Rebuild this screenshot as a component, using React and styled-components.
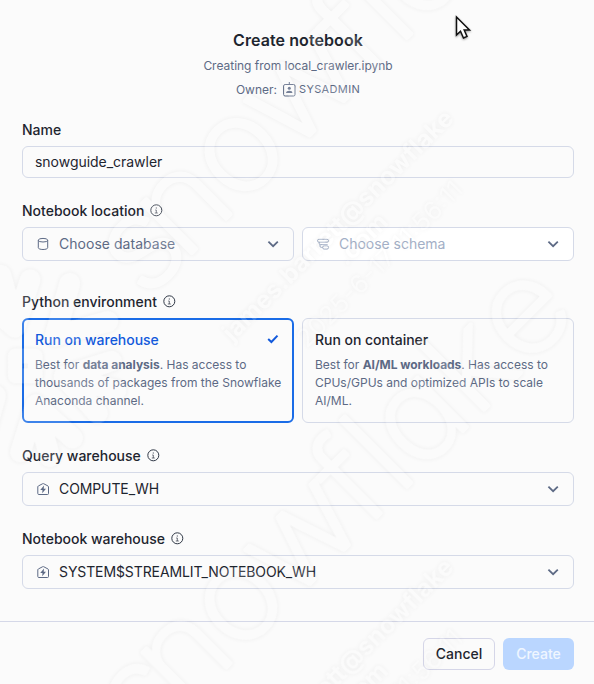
import React from "react";
import styled, { createGlobalStyle } from "styled-components";

const GlobalStyle = createGlobalStyle`
  * { box-sizing: border-box; }
  body { margin: 0; background: #fbfbfb; }
`;

const Dialog = styled.main`
  position: relative;
  display: flex;
  flex-direction: column;
  width: 594px;
  height: 684px;
  overflow: hidden;
  background: #fbfbfb;
  color: #1e252f;
  font: 400 14px/20px Inter, sans-serif;
`;
const Header = styled.header`
  display: flex;
  flex-direction: column;
  align-items: center;
  padding: 30px 0 0 2px;
  height: 120px;
  color: #5d6a85;
  font-size: 12px;
`;
const Title = styled.h1`
  margin: 0 0 5px;
  color: #1e252f;
  font-size: 16px;
  line-height: 21px;
  font-weight: 600;
  letter-spacing: 0.08px;
`;
const Subtitle = styled.div`
  letter-spacing: -0.02px;
`;
const Owner = styled.div`
  display: flex;
  align-items: center;
  margin-top: 4px;
  svg { margin: -2px 3px 0 6px; }
`;
const Role = styled.span`
  margin-top: -2px;
  font-size: 11px;
  letter-spacing: 0.35px;
`;
const Form = styled.div`
  display: flex;
  flex-direction: column;
  height: 501px;
  padding: 0 20px 0 22px;
`;
const Field = styled.section`
  height: ${(p) => p.$height}px;
`;
const Label = styled.div`
  display: flex;
  align-items: center;
  gap: 5px;
  height: 20px;
  margin-bottom: 6px;
  font-weight: 500;
  letter-spacing: 0;
`;
const Input = styled.div`
  display: flex;
  align-items: center;
  height: 32px;
  padding: 0 12px;
  border: 1px solid #d5dae8;
  border-radius: 6px;
  letter-spacing: -0.03px;
`;
const Pair = styled.div`
  display: grid;
  grid-template-columns: repeat(2, minmax(0, 1fr));
  gap: 8px;
`;
const Select = styled.div`
  display: flex;
  align-items: center;
  height: 34px;
  padding: 0 12px;
  border: 1px solid #d5dae8;
  border-radius: 6px;
  background: ${(p) => (p.$disabled ? "#fff" : "transparent")};
  color: ${(p) => (p.$disabled ? "#a3afc6" : p.$placeholder ? "#5d6a85" : "#1e252f")};
  letter-spacing: ${(p) => p.$track || -0.1}px;
  svg { flex: none; }
`;
const Value = styled.span`
  flex: 1;
  margin-left: 8px;
`;
const Option = styled.article`
  height: 105px;
  padding: ${(p) => (p.$selected ? "10px 11px 0 11px" : "11px 11px 0 12px")};
  border: ${(p) => (p.$selected ? "2px solid #1a6ce7" : "1px solid #d5dae8")};
  border-radius: 6px;
  color: #5d6a85;
  font-size: 12px;
  line-height: 18px;
`;
const OptionTitle = styled.div`
  display: flex;
  align-items: center;
  justify-content: space-between;
  height: 20px;
  margin-bottom: 6px;
  color: ${(p) => (p.$selected ? "#1259db" : "#1e252f")};
  font-size: 14px;
  font-weight: 500;
  letter-spacing: -0.03px;
  svg { margin: -2px 2px 0 0; }
`;
const Copy = styled.div`
  white-space: nowrap;
  letter-spacing: 0;
  b { font-weight: 700; letter-spacing: -0.04px; }
`;
const Footer = styled.footer`
  display: flex;
  justify-content: flex-end;
  gap: 8px;
  height: 63px;
  padding: 16px 20px 0;
  border-top: 1px solid #d5d8e8;
`;
const Button = styled.button`
  width: ${(p) => (p.$primary ? 71 : 72)}px;
  height: 32px;
  padding: 0 0 1px;
  border: ${(p) => (p.$primary ? "0" : "1px solid #d5d6e8")};
  border-radius: 6px;
  background: ${(p) => (p.$primary ? "#bad6ff" : "transparent")};
  color: ${(p) => (p.$primary ? "#f0f6ff" : "#1e252f")};
  font: 500 14px Inter, sans-serif;
`;
const Overlay = styled.svg`
  position: absolute;
  inset: 0;
  pointer-events: none;
`;
const Wordmark = styled.g`
  font: 200 125px Inter, sans-serif;
  font-feature-settings: "cv11";
  text-anchor: middle;
`;
const Pointer = styled.svg`
  position: absolute;
  left: 450px;
  top: 12px;
  filter: drop-shadow(0 1px 1px #0006);
`;

const Info = () => (
  <svg width="14" height="14" viewBox="0 0 14 14" fill="none" stroke="#303846">
    <circle cx="7.3" cy="6.3" r="5.5" />
    <path d="M6.2 6h1.1v3M5.8 9h3" strokeWidth=".7" /><path d="M6.8 4h1" />
  </svg>
);
const Chevron = () => (
  <svg width="16" height="16" viewBox="0 0 16 16" fill="none" stroke="#5d6a85" strokeWidth="1.8">
    <path d="m3.4 5.7 4.7 4.5 4.7-4.5" />
  </svg>
);
const Database = () => (
  <svg width="16" height="16" viewBox="0 0 16 16" fill="none" stroke="#5d6a85">
    <ellipse cx="8" cy="4.2" rx="4.7" ry="1.8" /><path d="M3.3 4.2v7.5c0 1.1 2.1 1.8 4.7 1.8s4.7-.7 4.7-1.8V4.2" />
  </svg>
);
const Schema = () => (
  <svg width="16" height="16" viewBox="0 0 16 16" fill="none" stroke="#a3afc6">
    <rect x="2.5" y="3.3" width="11" height="2.9" rx="1.4" /><rect x="7.7" y="9.8" width="5.8" height="3.3" rx="1.5" />
    <path d="M4.2 6.2v1.2q0 1.2 1.2 1.2h7.3M5 8.5v1.6q0 1.3 1.3 1.3h1.4" />
  </svg>
);
const Warehouse = () => (
  <svg width="16" height="16" viewBox="0 0 16 16" fill="none" stroke="#5d6a85">
    <path d="M3.8 13.5a1 1 0 0 1-1-1V5.9q0-.6.5-.9L7.7 2.7q.5-.3 1 0L13 5q.5.3.5.9v6.6a1 1 0 0 1-1 1z" />
    <path d="M9 4.5 5.2 9h2.3l-.3 3.2L11 7.8H8.7z" fill="#5d6a85" stroke="none" />
  </svg>
);
const Badge = () => (
  <svg width="13" height="15" viewBox="0 0 13 15" fill="none" stroke="#5d6a85">
    <rect x=".6" y="2.5" width="11.4" height="11.5" rx="1.5" /><path d="M6.3 0v3" />
    <circle cx="6.3" cy="6.2" r="1.5" fill="#5d6a85" stroke="none" /><path d="M3.2 11q0-2.3 3.1-2.3T9.4 11z" fill="#5d6a85" stroke="none" />
  </svg>
);
const Check = () => (
  <svg width="12" height="12" viewBox="0 0 12 12" fill="none" stroke="#1259db" strokeWidth="2">
    <path d="m1.2 6 3.2 3L10.5 2.6" />
  </svg>
);

const letters = [["s", -78], ["n", -18], ["o", 59], ["w", 149], ["f", 222], ["l", 262], ["a", 316], ["k", 390], ["e", 464]];
const Mark = ({ y }) => (
  <g transform={`translate(224 ${221 + y}) rotate(-45)`}>
    <Wordmark fill="#fff" stroke="#fff" strokeWidth="4" strokeLinejoin="round">
      {letters.map(([c, x]) => <text key={c} transform={`translate(${x} 0) scale(1.08 1.03)`}>{c}</text>)}
    </Wordmark>
    <g transform="translate(-243 -38)" fill="none" stroke="#fff" strokeWidth="21" strokeLinecap="round" strokeLinejoin="round">
      <rect x="-10" y="-10" width="20" height="20" strokeWidth="15" transform="rotate(45)" />
      {[0, 60, 120, 180, 240, 300].map((a) => (
        <path key={a} transform={`rotate(${a})`} d={a % 180 ? "M82-27 40 0 82 27M42 0H94" : "M90-27 42 0 90 27"} />
      ))}
    </g>
    <g fill="#fff" fontFamily="Inter, sans-serif" fontSize="25">
      <text x="-80" y="92" fontWeight="700" textLength="315" lengthAdjust="spacingAndGlyphs">james.barrett@snowflake</text>
      <text x="54" y="119" fontWeight="700">.com</text>
      <text x="-32" y="149" fontWeight="400" textLength="223" lengthAdjust="spacingAndGlyphs">2025-6-17 11:56:11</text>
    </g>
  </g>
);

export default function App() {
  return (
    <>
      <GlobalStyle />
      <Dialog>
        <Header>
          <Title>Create notebook</Title>
          <Subtitle>Creating from local_crawler.ipynb</Subtitle>
          <Owner>Owner: <Badge /><Role>SYSADMIN</Role></Owner>
        </Header>
        <Form>
          <Field $height={81}><Label>Name</Label><Input>snowguide_crawler</Input></Field>
          <Field $height={91}>
            <Label>Notebook location <Info /></Label>
            <Pair>
              <Select $placeholder $track={0.03}><Database /><Value>Choose database</Value><Chevron /></Select>
              <Select $disabled $track={-0.03}><Schema /><Value>Choose schema</Value><Chevron /></Select>
            </Pair>
          </Field>
          <Field $height={154}>
            <Label>Python environment <Info /></Label>
            <Pair>
              <Option $selected>
                <OptionTitle $selected>Run on warehouse <Check /></OptionTitle>
                <Copy>Best for <b>data analysis</b>. Has access to<br />thousands of packages from the Snowflake<br />Anaconda channel.</Copy>
              </Option>
              <Option>
                <OptionTitle>Run on container</OptionTitle>
                <Copy>Best for <b>AI/ML workloads</b>. Has access to<br />CPUs/GPUs and optimized APIs to scale<br />AI/ML.</Copy>
              </Option>
            </Pair>
          </Field>
          <Field $height={83}>
            <Label>Query warehouse <Info /></Label>
            <Select><Warehouse /><Value>COMPUTE_WH</Value><Chevron /></Select>
          </Field>
          <Field $height={80}>
            <Label>Notebook warehouse <Info /></Label>
            <Select><Warehouse /><Value>SYSTEM$STREAMLIT_NOTEBOOK_WH</Value><Chevron /></Select>
          </Field>
        </Form>
        <Footer><Button>Cancel</Button><Button $primary>Create</Button></Footer>
        <Overlay width="594" height="684" aria-hidden="true">
          <defs><filter id="emboss" x="-20" y="-20" width="634" height="724" filterUnits="userSpaceOnUse" colorInterpolationFilters="sRGB"><feDropShadow dx="0" dy="0" stdDeviation="2.4" floodColor="#000" floodOpacity=".34" /></filter></defs>
          <g filter="url(#emboss)" opacity=".16"><Mark y={0} /><Mark y={449} /></g>
        </Overlay>
        <Pointer width="24" height="30" viewBox="0 0 24 30">
          <path d="M6.5 5v18l4-3.8 3 6.8 3.5-1.6-2.8-6.4h5.3z" fill="#fff" stroke="#111" strokeWidth="1.5" />
        </Pointer>
      </Dialog>
    </>
  );
}
